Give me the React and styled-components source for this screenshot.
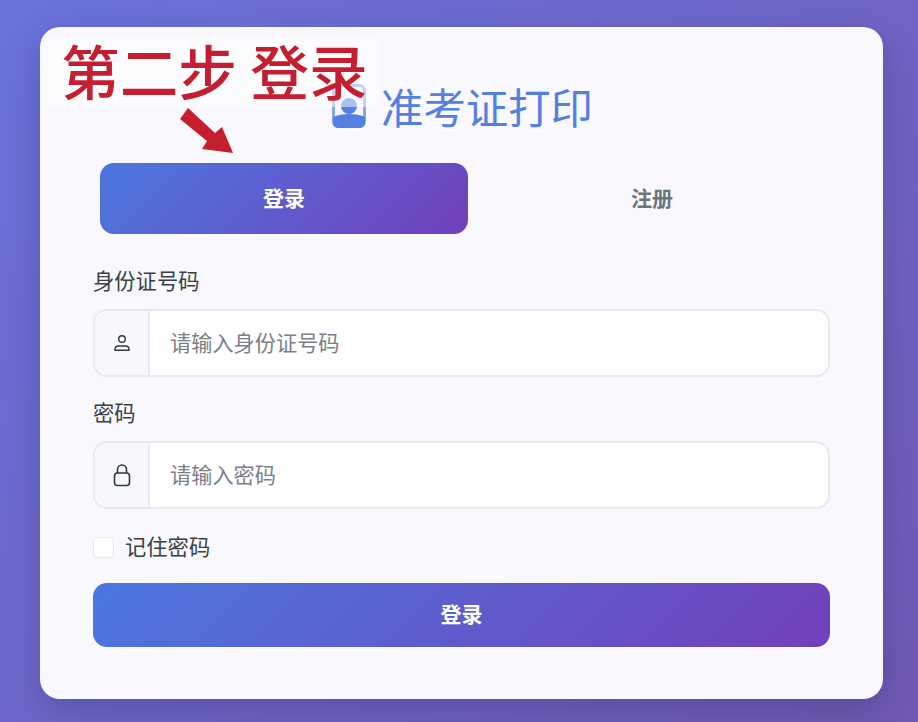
import React from 'react'
import styled, { createGlobalStyle } from 'styled-components'

const Global = createGlobalStyle`
  html, body {
    margin: 0;
    padding: 0;
  }
  body {
    font-family: "Noto Sans CJK SC", "Liberation Sans", sans-serif;
  }
  * {
    box-sizing: border-box;
  }
`

const Page = styled.div`
  position: relative;
  width: 918px;
  height: 722px;
  overflow: hidden;
  padding: 27px 35px 23px 40px;
  background: linear-gradient(135deg, #6a72dc 0%, #7059b2 100%);
`

const Card = styled.div`
  height: 672px;
  padding: 52px 53px 0;
  background: #f8f8fd;
  border-radius: 20px;
  box-shadow: 0 12px 34px rgba(40, 40, 90, 0.28);
`

const Title = styled.h1`
  display: flex;
  align-items: center;
  justify-content: center;
  gap: 15px;
  height: 54px;
  margin: 0 0 30px 2px;
  font-size: 42.4px;
  line-height: 54px;
  font-weight: 400;
  color: #5480e2;
`

const Tabs = styled.div`
  display: flex;
  width: 736px;
  margin: 0 0 0 7px;
`

const Tab = styled.div`
  flex: 1;
  height: 71px;
  display: flex;
  align-items: center;
  justify-content: center;
  padding-bottom: 4px;
  font-size: 21px;
  font-weight: 700;
  border-radius: 14px;
  color: ${p => (p.$active ? '#fff' : '#6c757d')};
  background: ${p => (p.$active ? 'linear-gradient(135deg, #4b77df 0%, #7240bb 100%)' : 'transparent')};
`

const Form = styled.div`
  display: flex;
  flex-direction: column;
  margin-top: 34px;
`

const Label = styled.div`
  height: 30px;
  font-size: 21.3px;
  line-height: 24px;
  color: #3b3f45;
  margin-bottom: 11px;
`

const InputGroup = styled.div`
  display: flex;
  width: 737px;
  height: 68px;
  margin-bottom: 23px;
  background: #fff;
  border: 2px solid #e8e9f3;
  border-radius: 14px;
  overflow: hidden;
`

const Addon = styled.div`
  width: 55px;
  display: flex;
  align-items: center;
  justify-content: center;
  background: #f7f8fc;
  border-right: 2px solid #e8e9f3;
  color: #33373c;
`

const Placeholder = styled.div`
  flex: 1;
  display: flex;
  align-items: center;
  padding: 0 0 3px 20px;
  font-size: 21.2px;
  color: #7b8086;
`

const Remember = styled.div`
  display: flex;
  align-items: center;
  gap: 11px;
  height: 30px;
  margin-top: 1px;
  font-size: 21.3px;
  line-height: 24px;
  color: #3b3f45;
`

const RememberText = styled.span`
  margin-top: -4px;
`

const Check = styled.span`
  width: 21px;
  height: 21px;
  margin-top: -1px;
  background: #fff;
  border: 1px solid #e6e7ef;
  border-radius: 5px;
`

const Submit = styled.div`
  width: 737px;
  height: 64px;
  margin-top: 20px;
  display: flex;
  align-items: center;
  justify-content: center;
  padding-bottom: 5px;
  font-size: 21px;
  font-weight: 700;
  color: #fff;
  border-radius: 14px;
  background: linear-gradient(135deg, #4b77df 0%, #7240bb 100%);
`

const Callout = styled.div`
  position: absolute;
  left: 47px;
  top: 38px;
  width: 333px;
  height: 69px;
  padding-left: 14px;
  background: rgba(255, 255, 255, 0.5);
  color: #c41e30;
  font-size: 58.7px;
  line-height: 64px;
  font-weight: 500;
  white-space: pre;
`

const ArrowMark = styled.svg`
  position: absolute;
  left: 178px;
  top: 106px;
`

function BadgeIcon() {
  return (
    <svg width="34" height="44" viewBox="0 0 34 44">
      <rect x="1.5" y="1.5" width="31" height="41" rx="5" fill="#f3f6fe" stroke="#87a5ea" strokeWidth="3" />
      <circle cx="17" cy="22" r="8" fill="#5480e2" />
      <path d="M1 33c4-2 10-3 16-3s12 1 16 3v6a5 5 0 0 1-5 5H6a5 5 0 0 1-5-5z" fill="#5480e2" />
    </svg>
  )
}

function UserIcon() {
  return (
    <svg width="18" height="18" viewBox="0 0 18 18" fill="none" stroke="currentColor" strokeWidth="1.4">
      <circle cx="9" cy="5" r="3.3" />
      <path d="M2 16.3v-1.1c0-2 1.6-3.2 3.6-3.2h6.8c2 0 3.6 1.2 3.6 3.2v1.1z" />
    </svg>
  )
}

function LockIcon() {
  return (
    <svg width="18" height="24" viewBox="0 0 18 24" fill="none" stroke="currentColor" strokeWidth="1.6">
      <rect x="1.5" y="10" width="15" height="12.5" rx="3" />
      <path d="M4.5 10V6.5a4.5 4.5 0 0 1 9 0V10" />
    </svg>
  )
}

export default function App() {
  return (
    <Page>
      <Global />
      <Card>
        <Title>
          <BadgeIcon />
          准考证打印
        </Title>
        <Tabs>
          <Tab $active>登录</Tab>
          <Tab>注册</Tab>
        </Tabs>
        <Form>
          <Label>身份证号码</Label>
          <InputGroup>
            <Addon><UserIcon /></Addon>
            <Placeholder>请输入身份证号码</Placeholder>
          </InputGroup>
          <Label>密码</Label>
          <InputGroup>
            <Addon><LockIcon /></Addon>
            <Placeholder>请输入密码</Placeholder>
          </InputGroup>
          <Remember>
            <Check />
            <RememberText>记住密码</RememberText>
          </Remember>
          <Submit>登录</Submit>
        </Form>
      </Card>
      <Callout>第二步 登录</Callout>
      <ArrowMark width="60" height="52" viewBox="0 0 60 52">
        <path d="M10 2L2 13L29 35L24 43L55 47L44 21L37 27Z" fill="#c41e30" />
      </ArrowMark>
    </Page>
  )
}
